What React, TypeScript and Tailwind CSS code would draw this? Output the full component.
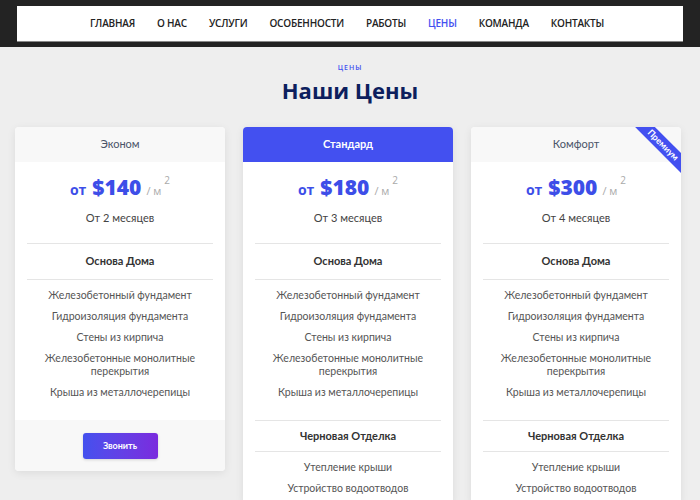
import React from "react";

const navItems = ["Главная", "О нас", "Услуги", "Особенности", "Работы", "Цены", "Команда", "Контакты"];

type Plan = {
  name: string;
  price: string;
  months: string;
  featured?: boolean;
  premium?: boolean;
};

const plans: Plan[] = [
  { name: "Эконом", price: "$140", months: "От 2 месяцев" },
  { name: "Стандард", price: "$180", months: "От 3 месяцев", featured: true },
  { name: "Комфорт", price: "$300", months: "От 4 месяцев", premium: true },
];

const base = [
  "Железобетонный фундамент",
  "Гидроизоляция фундамента",
  "Стены из кирпича",
  "Железобетонные монолитные перекрытия",
  "Крыша из металлочерепицы",
];

const rough = ["Утепление крыши", "Устройство водоотводов"];

function FeatureList({ items }: { items: string[] }) {
  return (
    <ul className="flex flex-col gap-[8px] py-[9px] text-[10.5px] leading-[13px] text-[#555]">
      {items.map((t) => (
        <li key={t} className="px-[24px]">
          {t}
        </li>
      ))}
    </ul>
  );
}

function PriceCard({ plan }: { plan: Plan }) {
  const short = !plan.featured && !plan.premium;
  return (
    <div className="relative w-[210px] overflow-hidden rounded-[4px] bg-white text-center shadow-[0_2px_8px_rgba(0,0,0,0.08)]">
      {/* header */}
      <div
        className={
          plan.featured
            ? "flex h-[35px] items-center justify-center bg-[#4350f0] text-[11px] font-bold text-white"
            : "flex h-[35px] items-center justify-center bg-[#f8f8f8] text-[11px] text-[#4a5468]"
        }
      >
        {plan.name}
      </div>

      {plan.premium && (
        <div className="absolute right-[-22px] top-[11px] flex h-[14px] w-[80px] rotate-45 items-center justify-center bg-[#4350f0] text-[9px] font-bold text-white">
          Премиум
        </div>
      )}

      {/* price */}
      <div className="flex items-baseline justify-center pt-[10px] text-[#3d4ee8]" style={{ fontFamily: '"Open Sans", sans-serif' }}>
        <span className="mr-[6px] text-[14px] font-bold">от</span>
        <span className="text-[21px] font-extrabold leading-[30px]">{plan.price}</span>
        <span className="ml-[5px] text-[11px] text-[#aaa]">/ м</span>
        <span className="relative top-[-11px] ml-[3px] text-[10px] text-[#aaa]">2</span>
      </div>
      <div className="pt-[8px] text-[11px] text-[#444]">{plan.months}</div>

      <div className="mx-3 mt-[17px] border-t border-[#e5e5e5]" />
      <div className="py-[9px] text-[11px] font-bold text-[#333]">Основа Дома</div>
      <div className="mx-3 border-t border-[#e5e5e5]" />
      <FeatureList items={base} />

      {short ? (
        <div className="mt-[12px] flex justify-center bg-[#f8f8f8] pb-[12px] pt-[13px]">
          <button className="h-[26px] w-[75px] rounded-[3px] bg-gradient-to-r from-[#4350ee] to-[#7a2ade] text-[9px] font-bold text-white shadow-[0_1px_3px_rgba(0,0,0,0.15)]">
            Звонить
          </button>
        </div>
      ) : (
        <>
          <div className="mx-3 mt-[12px] border-t border-[#e5e5e5]" />
          <div className="py-[7px] text-[11px] font-bold text-[#333]">Черновая Отделка</div>
          <div className="mx-3 border-t border-[#e5e5e5]" />
          <FeatureList items={rough} />
        </>
      )}
    </div>
  );
}

export default function App() {
  return (
    <div
      className="h-[500px] w-[700px] overflow-hidden bg-[#eeeeee]"
      style={{ fontFamily: 'Lato, "Open Sans", sans-serif' }}
    >
      {/* top nav */}
      <div className="bg-[#232323] px-[17px] pb-[6px] pt-[6px]">
        <nav
          className="flex h-[35px] items-center justify-center gap-[22px] bg-white pr-[6px] shadow-[0_1px_0_#888]"
          style={{ fontFamily: '"Open Sans", sans-serif' }}
        >
          {navItems.map((n) => (
            <a
              key={n}
              className={
                n === "Цены"
                  ? "text-[10px] font-semibold uppercase tracking-[-0.2px] text-[#4350f0]"
                  : "text-[10px] font-semibold uppercase tracking-[-0.2px] text-[#222]"
              }
            >
              {n}
            </a>
          ))}
        </nav>
      </div>

      {/* heading */}
      <div className="pt-[16px] text-center" style={{ fontFamily: '"Open Sans", sans-serif' }}>
        <div className="text-[7px] font-semibold uppercase tracking-[1px] text-[#4350f0]">Цены</div>
        <h2 className="mt-[1px] text-[22px] font-bold leading-[30px] text-[#0d1f5e]">Наши Цены</h2>
      </div>

      {/* cards */}
      <div className="mt-[22px] flex items-start gap-[18px] pl-[15px]">
        {plans.map((p) => (
          <PriceCard key={p.name} plan={p} />
        ))}
      </div>
    </div>
  );
}
